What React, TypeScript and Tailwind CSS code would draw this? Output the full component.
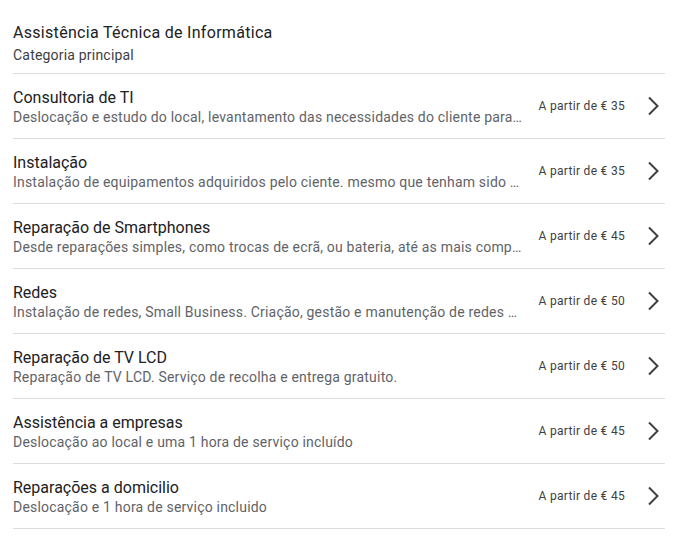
import React from "react";

const items = [
  { t: "Consultoria de TI", d: "Deslocação e estudo do local, levantamento das necessidades do cliente para elaboração de um orçamento", p: "35" },
  { t: "Instalação", d: "Instalação de equipamentos adquiridos pelo ciente. mesmo que tenham sido adquiridos noutro local", p: "35" },
  { t: "Reparação de Smartphones", d: "Desde reparações simples, como trocas de ecrã, ou bateria, até as mais complexas", p: "45" },
  { t: "Redes", d: "Instalação de redes, Small Business. Criação, gestão e manutenção de redes empresariais", p: "50" },
  { t: "Reparação de TV LCD", d: "Reparação de TV LCD. Serviço de recolha e entrega gratuito.", p: "50" },
  { t: "Assistência a empresas", d: "Deslocação ao local e uma 1 hora de serviço incluído", p: "45" },
  { t: "Reparações a domicilio", d: "Deslocação e 1 hora de serviço incluido", p: "45" },
];

function Chevron() {
  return (
    <svg width="24" height="24" viewBox="0 0 24 24" className="shrink-0">
      <path d="M8 3.5 16.5 12 8 20.5" fill="none" stroke="#3c4043" strokeWidth="2" />
    </svg>
  );
}

export default function App() {
  return (
    <div className="bg-white min-h-[552px] pl-[13px] pr-[22px]" style={{ fontFamily: "Roboto, 'Liberation Sans', sans-serif" }}>
      <div className="pt-[21px] pb-[8px] border-b border-[#dadce0]">
        <div className="text-[16px] tracking-[0.3px] leading-6 text-[#202124]">Assistência Técnica de Informática</div>
        <div className="text-[14px] tracking-[0.2px] leading-5 text-[#3c4043]">Categoria principal</div>
      </div>
      {items.map((it) => (
        <div key={it.t} className="flex items-center pt-[12px] pb-[12px] border-b border-[#dadce0]">
          <div className="flex-1 min-w-0">
            <div className="text-[16px] leading-[23px] text-[#202124] truncate">{it.t}</div>
            <div className="text-[14px] tracking-[0.2px] leading-[17px] text-[#5f6368] truncate">{it.d}</div>
          </div>
          <div className="ml-4 shrink-0 text-[12px] tracking-[0.3px] leading-4 text-[#3c4043] whitespace-nowrap">A partir de € {it.p}</div>
          <div className="ml-4 shrink-0"><Chevron /></div>
        </div>
      ))}
    </div>
  );
}
